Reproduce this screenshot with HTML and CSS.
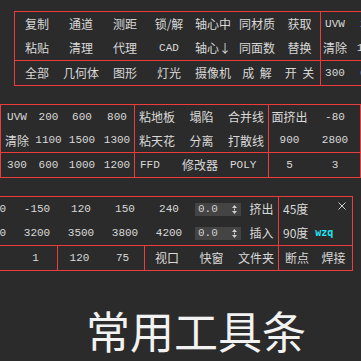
FILE: index.html
```html
<!DOCTYPE html>
<html>
<head>
<meta charset="utf-8">
<link rel="stylesheet" href="styles.css">
</head>
<body>
<div class="page">
  <div class="panel p1">
    <div class="block">
      <div class="grid top c1a">
        <span>复制</span><span>通道</span><span>测距</span><span>锁/解</span><span>轴心中</span><span>同材质</span><span>获取</span>
        <span>粘贴</span><span>清理</span><span>代理</span><span class="m">CAD</span><span>轴心↓</span><span>同面数</span><span>替换</span>
      </div>
      <div class="grid bot c1a">
        <span>全部</span><span>几何体</span><span>图形</span><span>灯光</span><span>摄像机</span><span>成&nbsp;&nbsp;解</span><span>开&nbsp;&nbsp;关</span>
      </div>
    </div>
    <div class="block">
      <div class="grid top c1b">
        <span class="m">UVW</span><span class="m">200</span><span class="m">600</span><span class="m">800</span>
        <span>清除</span><span class="m">1100</span><span class="m">1500</span><span class="m">1300</span>
      </div>
      <div class="grid bot c1b">
        <span class="m">300</span><span class="m">600</span><span class="m">1000</span><span class="m">1200</span>
      </div>
    </div>
  </div>

  <div class="panel p2">
    <div class="block">
      <div class="grid top c2a">
        <span class="m">UVW</span><span class="m">200</span><span class="m">600</span><span class="m">800</span>
        <span>清除</span><span class="m">1100</span><span class="m">1500</span><span class="m">1300</span>
      </div>
      <div class="grid bot c2a">
        <span class="m">300</span><span class="m">600</span><span class="m">1000</span><span class="m">1200</span>
      </div>
    </div>
    <div class="block">
      <div class="grid top c2b">
        <span>粘地板</span><span>塌陷</span><span>合并线</span>
        <span>粘天花</span><span>分离</span><span>打散线</span>
      </div>
      <div class="row bot r2b">
        <span class="m ffd">FFD</span><span class="mod">修改器</span><span class="m">POLY</span>
      </div>
    </div>
    <div class="block">
      <div class="grid top c2c">
        <span>面挤出</span><span class="m">-80</span>
        <span class="m">900</span><span class="m">2800</span>
      </div>
      <div class="grid bot c2c">
        <span class="m">5</span><span class="m">3</span>
      </div>
    </div>
  </div>

  <div class="panel p3">
    <div class="block">
      <div class="grid top c3a">
        <span class="m">-100</span><span class="m">-150</span><span class="m">120</span><span class="m">150</span><span class="m">240</span>
        <span class="spin"><span class="m">0.0</span><svg class="arr" width="5" height="9" viewBox="0 0 5 9"><path d="M2.5 0 L5 3 L0 3 Z M2 3.5 H3 V5.5 H2 Z M0 6 L5 6 L2.5 9 Z" fill="#cfcfcf"/></svg></span>
        <span>挤出</span>
        <span class="m">2900</span><span class="m">3200</span><span class="m">3500</span><span class="m">3800</span><span class="m">4200</span>
        <span class="spin"><span class="m">0.0</span><svg class="arr" width="5" height="9" viewBox="0 0 5 9"><path d="M2.5 0 L5 3 L0 3 Z M2 3.5 H3 V5.5 H2 Z M0 6 L5 6 L2.5 9 Z" fill="#cfcfcf"/></svg></span>
        <span>插入</span>
      </div>
      <div class="row bot r3a">
        <div class="cell cA"><span></span><span class="m">1</span></div>
        <div class="cell cB"><span class="m">120</span><span class="m">75</span></div>
        <div class="cell cC"><span>视口</span><span>快窗</span><span>文件夹</span></div>
      </div>
    </div>
    <div class="block side">
      <div class="top sidetop">
        <div class="line"><span>45度</span></div>
        <div class="line"><span>90度</span><span class="wzq">wzq</span></div>
        <svg class="close" width="8" height="8" viewBox="0 0 8 8"><path d="M0.5 0.5 L7.5 7.5 M7.5 0.5 L0.5 7.5" stroke="#cfcfcf" stroke-width="1"/></svg>
      </div>
      <div class="grid bot c3b">
        <span>断点</span><span>焊接</span>
      </div>
    </div>
  </div>

  <div class="title">常用工具条</div>
</div>
</body>
</html>
```

FILE: styles.css
```css
html, body {
  margin: 0;
  padding: 0;
  background: #2b2b2b;
  overflow: hidden;
}
body {
  width: 361px;
  height: 361px;
  font-family: "Noto Sans CJK SC", "Noto Sans", sans-serif;
  font-size: 12px;
  color: #d9d9d9;
}
.page {
  display: flex;
  flex-direction: column;
  gap: 18px;
  padding-top: 11px;
}
.panel {
  display: flex;
  flex: none;
  align-self: flex-start;
  border: 1px solid #ee3c3c;
}
.block {
  display: flex;
  flex-direction: column;
}
.block + .block {
  border-left: 1px solid #ee3c3c;
}
.grid {
  display: grid;
  align-items: center;
  justify-items: center;
}
.grid span, .row span {
  white-space: nowrap;
  line-height: 1;
}
.top {
  grid-template-rows: 24px 24px;
  border-bottom: 1px solid #ee3c3c;
}
.bot {
  grid-template-rows: 24px;
  height: 24px;
}
.m {
  font-family: "Liberation Mono", "DejaVu Sans Mono", monospace;
  font-size: 11px;
}

/* panel 1 */
.p1 { margin-left: 14px; }
.c1a { grid-template-columns: repeat(6, 44px) 41px; }
.c1b { grid-template-columns: 28px 42px 34px 34px; }

/* panel 2 */
.p2 .top { grid-template-rows: 24px 23px; }
.c2a { grid-template-columns: 32px 31px 36px 34px; }
.c2b { grid-template-columns: 44px 45px 44px; }
.c2c { grid-template-columns: 41px 50px; }
.row {
  display: flex;
  align-items: center;
}
.r2b { width: 133px; padding-left: 5px; box-sizing: border-box; }
.ffd { width: 42px; }
.mod { width: 48px; }

/* panel 3 */
.p3 { margin-left: -30px; }
.c3a { grid-template-columns: repeat(5, 44px) 54px 33px; }
.spin {
  width: 46px;
  height: 13px;
  background: #444444;
  display: flex;
  align-items: center;
  justify-content: space-between;
  padding: 0 4px 0 3px;
  box-sizing: border-box;
  color: #cfcfcf;
}
.r3a { width: 307px; }
.cell {
  display: grid;
  height: 24px;
  align-items: center;
  justify-items: center;
}
.cA { width: 86px; grid-template-columns: 43px 43px; border-right: 1px solid #ee3c3c; }
.cB { width: 86px; grid-template-columns: 43px 43px; border-right: 1px solid #ee3c3c; }
.cC { width: 133px; grid-template-columns: 44px 45px 44px; }
.side { width: 73px; }
.sidetop {
  position: relative;
  display: flex;
  flex-direction: column;
  height: 48px;
}
.line {
  height: 24px;
  display: flex;
  align-items: center;
  padding-left: 4px;
  gap: 7px;
}
.line span { line-height: 1; white-space: nowrap; }
.wzq {
  font-family: "DejaVu Sans Mono", monospace;
  font-weight: bold;
  font-size: 10px;
  color: #22e3f0;
}
.close {
  position: absolute;
  top: 5px;
  right: 6px;
}
.c3b { grid-template-columns: 36px 37px; }

.title {
  margin-top: 19px;
  padding-left: 86px;
  font-size: 44px;
  line-height: 44px;
  color: #f2f2f2;
  white-space: nowrap;
}
```
